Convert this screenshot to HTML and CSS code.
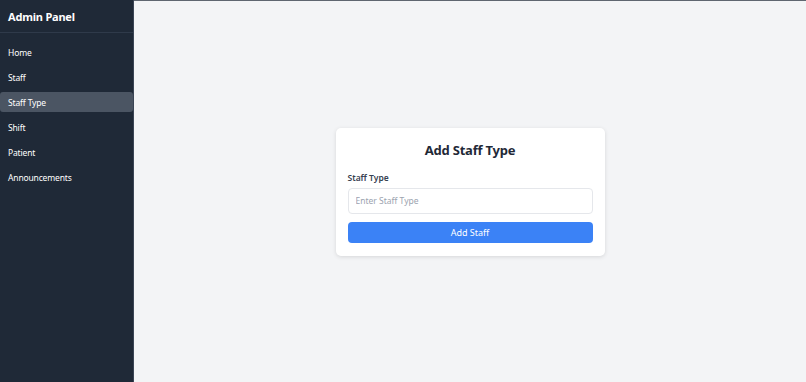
FILE: index.html
```html
<!DOCTYPE html>
<html lang="en">
<head>
    <meta charset="UTF-8">
    <meta name="viewport" content="width=device-width, initial-scale=1.0">
    <title>Admin Panel</title>
    <link rel="stylesheet" href="styles.css">
</head>
<body>
    <div class="layout">
        <aside class="sidebar">
            <div class="sidebar-header">Admin Panel</div>
            <nav class="nav">
                <a href="#" class="nav-link">Home</a>
                <a href="#" class="nav-link">Staff</a>
                <a href="#" class="nav-link active">Staff Type</a>
                <a href="#" class="nav-link">Shift</a>
                <a href="#" class="nav-link">Patient</a>
                <a href="#" class="nav-link">Announcements</a>
            </nav>
        </aside>

        <main class="main">
            <div class="card">
                <h2>Add Staff Type</h2>
                <form class="form" onsubmit="return false">
                    <label for="staffType">Staff Type</label>
                    <input type="text" id="staffType" placeholder="Enter Staff Type">
                    <button type="submit" class="submit-btn">Add Staff</button>
                </form>
            </div>
        </main>
    </div>
</body>
</html>
```

FILE: styles.css
```css
* {
    margin: 0;
    padding: 0;
    box-sizing: border-box;
}

body {
    font-family: "Noto Sans", "Open Sans", sans-serif;
    background: #f3f4f6;
    color: #1f2937;
}

.layout {
    display: flex;
    height: 100vh;
}

.sidebar {
    width: 134px;
    background: #1f2937;
    color: white;
    border-right: 1px solid #3b4555;
}

.sidebar-header {
    height: 33px;
    padding: 1px 8px 0;
    display: flex;
    align-items: center;
    font-size: 11px;
    font-weight: 700;
    letter-spacing: -0.2px;
    border-bottom: 1px solid #2f3a4a;
}

.nav {
    display: flex;
    flex-direction: column;
    gap: 5px;
    padding-top: 9px;
}

.nav-link {
    display: block;
    height: 20px;
    line-height: 21px;
    padding: 0 8px;
    font-size: 8.5px;
    letter-spacing: -0.15px;
    color: white;
    text-decoration: none;
    border-radius: 3px;
}

.nav-link.active {
    background: #4b5563;
}

.main {
    flex: 1;
    display: flex;
    align-items: center;
    justify-content: center;
    border-top: 1px solid #5f6670;
}

.card {
    width: 269px;
    background: white;
    border-radius: 5px;
    box-shadow: 0 1px 4px rgba(0,0,0,0.12);
    padding: 13px 12px 13px;
}

.card h2 {
    text-align: center;
    font-size: 13px;
    font-weight: 700;
    letter-spacing: -0.2px;
    color: #1f2937;
    margin-bottom: 13px;
}

.form {
    display: flex;
    flex-direction: column;
}

.form label {
    font-size: 8.5px;
    font-weight: 600;
    color: #374151;
    margin-bottom: 5px;
}

.form input {
    height: 26px;
    padding: 0 7px;
    border: 1px solid #e5e7eb;
    border-radius: 4px;
    font-family: inherit;
    font-size: 8.5px;
    margin-bottom: 8px;
}

.form input::placeholder {
    color: #9ca3af;
}

.submit-btn {
    height: 21px;
    background: #3b82f6;
    color: white;
    border: none;
    border-radius: 4px;
    font-family: inherit;
    font-size: 9px;
    cursor: pointer;
}
```
